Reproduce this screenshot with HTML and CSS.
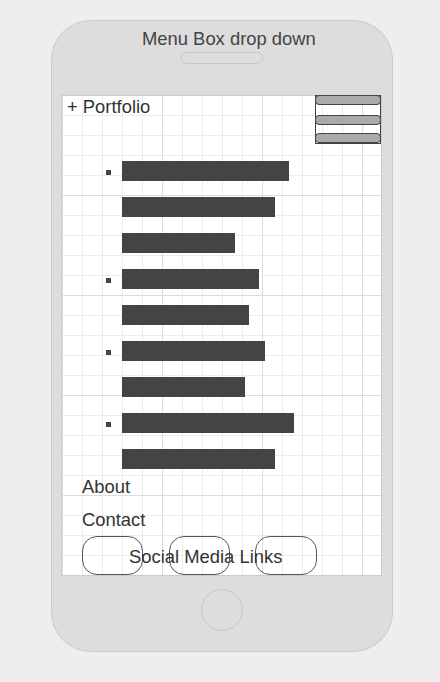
FILE: index.html
```html
<!DOCTYPE html>
<html>
<head>
<meta charset="utf-8">
<link rel="stylesheet" href="styles.css">
</head>
<body>
<div class="phone">
  <div class="title">Menu Box drop down</div>
  <div class="speaker"></div>
  <div class="screen">
    <div class="header">
      <div class="brand">+ Portfolio</div>
      <div class="menu-box">
        <div class="menu-bar"></div>
        <div class="menu-bar"></div>
        <div class="menu-bar"></div>
      </div>
    </div>
    <ul class="items">
      <li class="item">
        <div class="bars">
          <div class="bar" style="width:167px"></div>
          <div class="bar" style="width:153px"></div>
          <div class="bar" style="width:113px"></div>
        </div>
      </li>
      <li class="item">
        <div class="bars">
          <div class="bar" style="width:137px"></div>
          <div class="bar" style="width:127px"></div>
        </div>
      </li>
      <li class="item">
        <div class="bars">
          <div class="bar" style="width:143px"></div>
          <div class="bar" style="width:123px"></div>
        </div>
      </li>
      <li class="item">
        <div class="bars">
          <div class="bar" style="width:172px"></div>
          <div class="bar" style="width:153px"></div>
        </div>
      </li>
    </ul>
    <div class="link link-about">About</div>
    <div class="link link-contact">Contact</div>
    <div class="social">
      <div class="social-boxes">
        <div class="social-box"></div>
        <div class="social-box"></div>
        <div class="social-box"></div>
      </div>
      <div class="social-label">Social Media Links</div>
    </div>
  </div>
  <div class="home"></div>
</div>
</body>
</html>
```
FILE: styles.css
```css
* {
  box-sizing: border-box;
}

html, body {
  margin: 0;
  padding: 0;
  background: #eeeeee;
  font-family: "Liberation Sans", Arial, sans-serif;
}

.phone {
  margin: 20px 0 0 51px;
  width: 342px;
  height: 632px;
  border: 1px solid #cacaca;
  border-radius: 40px;
  background: #dddddd;
  display: flex;
  flex-direction: column;
}

.title {
  margin-top: 8px;
  padding-left: 90px;
  height: 20px;
  font-size: 18.4px;
  line-height: 20px;
  color: #444444;
}

.speaker {
  margin-top: 3px;
  align-self: center;
  width: 82px;
  height: 12px;
  border: 1px solid #c8c8c8;
  border-radius: 6px;
}

.screen {
  margin-top: 31px;
  margin-left: 9px;
  width: 321px;
  height: 481px;
  border: 1px solid #cccccc;
  background-color: #ffffff;
  background-image:
    linear-gradient(to right, #dcdcdc 1px, transparent 1px),
    linear-gradient(to bottom, #dcdcdc 1px, transparent 1px),
    linear-gradient(to right, #ebebeb 1px, transparent 1px),
    linear-gradient(to bottom, #ebebeb 1px, transparent 1px);
  background-size: 100px 100px, 100px 100px, 20px 20px, 20px 20px;
  background-position: 0 -1px, 0 -1px, 0 -1px, 0 -1px;
  display: flex;
  flex-direction: column;
}

.header {
  display: flex;
  justify-content: space-between;
  align-items: flex-start;
  height: 48px;
}

.brand {
  padding-left: 5px;
  padding-top: 1px;
  font-size: 18.4px;
  line-height: 20px;
  color: #333333;
}

.menu-box {
  margin-top: -1px;
  width: 66px;
  height: 49px;
  border: 1px solid #444444;
  display: flex;
  flex-direction: column;
}

.menu-bar {
  margin-left: -1px;
  margin-right: -1px;
  height: 10px;
  background: #aaaaaa;
  border: 1px solid #444444;
  border-radius: 4px;
}

.menu-bar:first-child {
  margin-top: -1px;
}

.menu-bar:nth-child(2) {
  margin-top: 10px;
}

.menu-bar:nth-child(3) {
  margin-top: 8px;
}

.items {
  list-style: none;
  margin: 17px 0 0;
  padding: 0 0 0 44px;
}

.item {
  display: grid;
  grid-template-columns: 5px auto;
  column-gap: 11px;
}

.item::before {
  content: "";
  width: 5px;
  height: 5px;
  margin-top: 9px;
  background: #444444;
}

.bar {
  height: 20px;
  margin-bottom: 16px;
  background: #444444;
}

.item:last-child .bar:last-child {
  margin-bottom: 0;
}

.link {
  padding-left: 20px;
  font-size: 18.4px;
  line-height: 20px;
  color: #333333;
}

.link-about {
  margin-top: 8px;
}

.link-contact {
  margin-top: 13px;
}

.social {
  margin-top: 6px;
  margin-left: 20px;
  display: grid;
}

.social-boxes,
.social-label {
  grid-area: 1 / 1;
}

.social-boxes {
  display: flex;
  column-gap: 26px;
}

.social-box {
  width: 61px;
  height: 39px;
  border: 1px solid #555555;
  border-radius: 15px;
}

.social-box:last-child {
  margin-left: -1px;
  width: 62px;
}

.social-label {
  align-self: center;
  padding-left: 47px;
  padding-top: 2px;
  font-size: 18.4px;
  line-height: 20px;
  color: #333333;
}

.home {
  margin-top: 13px;
  align-self: center;
  width: 42px;
  height: 42px;
  border: 1px solid #c8c8c8;
  border-radius: 50%;
}
```
